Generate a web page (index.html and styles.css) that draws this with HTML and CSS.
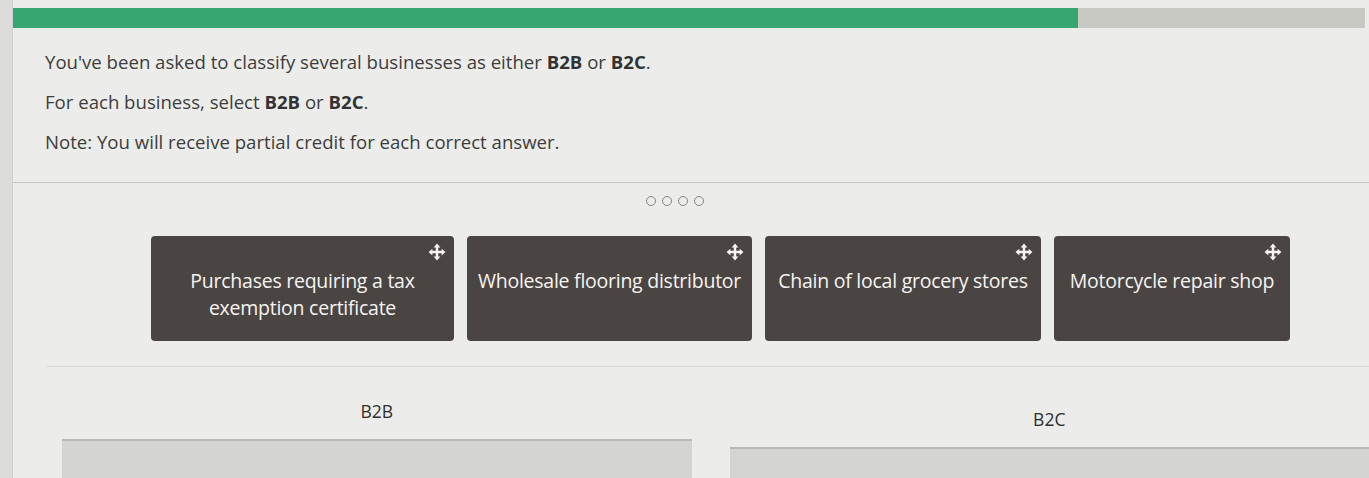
FILE: index.html
```html
<!DOCTYPE html>
<html lang="en">
<head>
<meta charset="utf-8">
<title>Classify businesses</title>
<link rel="stylesheet" href="styles.css">
</head>
<body>
<div class="page">
  <div class="progress"><div class="progress-fill" style="width:78.8%"></div></div>
  <div class="prompt">
    <p>You've been asked to classify several businesses as either <b>B2B</b> or <b>B2C</b>.</p>
    <p>For each business, select <b>B2B</b> or <b>B2C</b>.</p>
    <p>Note: You will receive partial credit for each correct answer.</p>
  </div>
  <div class="divider"></div>
  <div class="dots"><span></span><span></span><span></span><span></span></div>
  <div class="cards">
    <div class="card card-1">
      <svg class="move" viewBox="0 0 16 16" aria-hidden="true"><path d="M8 0.5 L11 3.9 H9.1 V6.9 H12.1 V5 L15.5 8 L12.1 11 V9.1 H9.1 V12.1 H11 L8 15.5 L5 12.1 H6.9 V9.1 H3.9 V11 L0.5 8 L3.9 5 V6.9 H6.9 V3.9 H5 Z"/></svg>
      <div class="card-text">Purchases requiring a tax exemption certificate</div>
    </div>
    <div class="card card-2">
      <svg class="move" viewBox="0 0 16 16" aria-hidden="true"><path d="M8 0.5 L11 3.9 H9.1 V6.9 H12.1 V5 L15.5 8 L12.1 11 V9.1 H9.1 V12.1 H11 L8 15.5 L5 12.1 H6.9 V9.1 H3.9 V11 L0.5 8 L3.9 5 V6.9 H6.9 V3.9 H5 Z"/></svg>
      <div class="card-text">Wholesale flooring distributor</div>
    </div>
    <div class="card card-3">
      <svg class="move" viewBox="0 0 16 16" aria-hidden="true"><path d="M8 0.5 L11 3.9 H9.1 V6.9 H12.1 V5 L15.5 8 L12.1 11 V9.1 H9.1 V12.1 H11 L8 15.5 L5 12.1 H6.9 V9.1 H3.9 V11 L0.5 8 L3.9 5 V6.9 H6.9 V3.9 H5 Z"/></svg>
      <div class="card-text">Chain of local grocery stores</div>
    </div>
    <div class="card card-4">
      <svg class="move" viewBox="0 0 16 16" aria-hidden="true"><path d="M8 0.5 L11 3.9 H9.1 V6.9 H12.1 V5 L15.5 8 L12.1 11 V9.1 H9.1 V12.1 H11 L8 15.5 L5 12.1 H6.9 V9.1 H3.9 V11 L0.5 8 L3.9 5 V6.9 H6.9 V3.9 H5 Z"/></svg>
      <div class="card-text">Motorcycle repair shop</div>
    </div>
  </div>
  <div class="divider-light"></div>
  <div class="zones">
    <div class="zone">
      <div class="zone-label">B2B</div>
      <div class="zone-box"></div>
    </div>
    <div class="zone zone-right">
      <div class="zone-label">B2C</div>
      <div class="zone-box"></div>
    </div>
  </div>
</div>
</body>
</html>
```
FILE: styles.css
```css
html, body {
  margin: 0;
  padding: 0;
  height: 100%;
  overflow: hidden;
}
body {
  background: #dcdddb;
  font-family: "Open Sans", "Liberation Sans", sans-serif;
  color: #3d3d3d;
}
.page {
  display: flex;
  flex-direction: column;
  margin-left: 12px;
  height: 100%;
  background: #ecedea;
  border-left: 1px solid #d0d1ce;
  padding-top: 8px;
  box-sizing: border-box;
  overflow: hidden;
}
.progress {
  flex: none;
  height: 20px;
  margin-right: 4px;
  background: #c9c9c4;
}
.progress-fill {
  height: 100%;
  background: #38a670;
}
.prompt {
  padding: 22px 0 0 32px;
  font-size: 18.6px;
}
.prompt p {
  margin: 0 0 16px;
  line-height: 24px;
}
.prompt p:last-child {
  margin-bottom: 0;
}
.prompt b {
  font-weight: 700;
  color: #333;
}
.divider {
  flex: none;
  margin-top: 28px;
  height: 1px;
  background: #c4c5c1;
}
.dots {
  display: flex;
  justify-content: center;
  gap: 6px;
  padding-top: 13px;
  padding-right: 32px;
}
.dots span {
  width: 8px;
  height: 8px;
  border: 1.5px solid #858585;
  border-radius: 50%;
}
.cards {
  display: flex;
  gap: 13px;
  padding: 30px 0 0 138px;
}
.card {
  position: relative;
  height: 105px;
  background: #4a4542;
  border-radius: 4px;
  box-sizing: border-box;
  padding: 31px 6px 0;
  color: #f6f4f2;
  font-size: 19.5px;
  font-weight: 500;
  line-height: 27px;
  text-align: center;
  letter-spacing: -0.25px;
}
.card-1 { width: 303px; padding-left: 12px; padding-right: 12px; }
.card-2 { width: 285px; }
.card-3 { width: 276px; }
.card-4 { width: 236px; }
.move {
  position: absolute;
  top: 7px;
  right: 8px;
  width: 18px;
  height: 18px;
  fill: #f6f4f2;
}
.divider-light {
  flex: none;
  margin: 25px 0 0 33px;
  height: 1px;
  background: #dadbd8;
}
.zones {
  flex: 1;
  min-height: 0;
  display: flex;
  gap: 38px;
  padding: 33px 0 0 49px;
}
.zone {
  display: flex;
  flex-direction: column;
  width: 630px;
}
.zone-right {
  width: 640px;
  padding-top: 8px;
}
.zone-label {
  text-align: center;
  font-size: 17.5px;
  color: #2f2f2f;
  line-height: 22px;
}
.zone-box {
  flex: 1;
  margin-top: 17px;
  background: #d4d5d1;
  border-top: 2px solid #b9bab6;
}
```
